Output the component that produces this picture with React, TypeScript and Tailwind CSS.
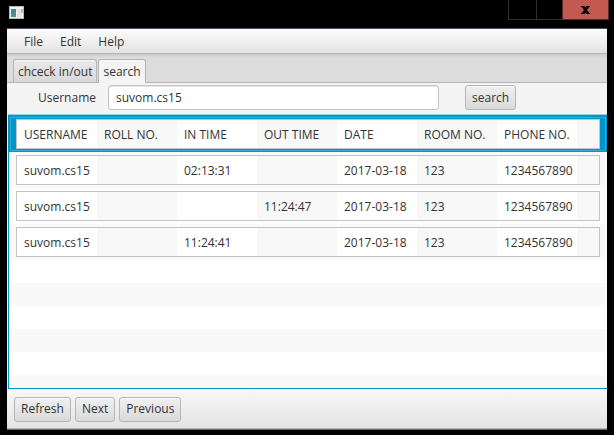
import React, { useState } from "react";

const columns = ["USERNAME", "ROLL NO.", "IN TIME", "OUT TIME", "DATE", "ROOM NO.", "PHONE NO."];

const records = [
  ["suvom.cs15", "", "02:13:31", "", "2017-03-18", "123", "1234567890"],
  ["suvom.cs15", "", "", "11:24:47", "2017-03-18", "123", "1234567890"],
  ["suvom.cs15", "", "11:24:41", "", "2017-03-18", "123", "1234567890"],
];

const cell =
  "flex w-20 items-center border-y border-[#c3c3c3] bg-white pt-0.5 pl-[7px] text-left font-normal first:w-[81px] first:border-l even:bg-[#f8f8f8] last:flex-1 last:border-r";

function PushButton({ children }: { children: React.ReactNode }) {
  return (
    <button
      type="button"
      className="flex h-[25px] items-center rounded-[3px] border border-[#b5b5b5] bg-linear-to-b from-[#f0f0f0] to-[#dadada] px-[6px] shadow-[inset_0_1px_0_#fafafa]"
    >
      {children}
    </button>
  );
}

function TitleBar() {
  return (
    <header className="flex h-7 items-start justify-between pr-[5px] pl-[9px]">
      <svg className="mt-[6px]" width="15" height="13" viewBox="0 0 15 13" aria-hidden="true">
        <defs>
          <linearGradient id="pane" x1="0" y1="0" x2="0" y2="1">
            <stop offset="0" stopColor="#4a80a0" />
            <stop offset="1" stopColor="#43a070" />
          </linearGradient>
        </defs>
        <rect width="15" height="13" fill="#b8b8b8" />
        <rect x="1" y="1" width="13" height="11" fill="#f0f0f0" />
        <rect x="2" y="3" width="5" height="8" fill="url(#pane)" />
        <rect x="8" y="3" width="4" height="8" fill="#e2e2e2" />
        <rect x="12" y="3" width="2" height="4" fill="#9dbdd0" />
      </svg>
      <div className="flex h-5">
        <button type="button" aria-label="Minimize" className="w-7 border-b border-l border-[#303030]" />
        <button type="button" aria-label="Maximize" className="w-[26px] border-b border-l border-[#303030]" />
        <button
          type="button"
          aria-label="Close"
          className="flex w-[47px] items-center justify-center border-r border-b border-l border-[#5a2a27] bg-[#c4594f]"
        >
          <svg width="9" height="8" viewBox="0 0 9 8" aria-hidden="true">
            <path d="M0 0h3.500l1 1.600L5.500 0H9v1h-.8L6 4l2.200 3H9v1H5.500l-1-1.600L3.500 8H0V7h.8L3 4 .8 1H0z" fill="#000" />
          </svg>
        </button>
      </div>
    </header>
  );
}

export default function App() {
  const [username, setUsername] = useState("suvom.cs15");

  return (
    <div className="flex min-h-screen flex-col bg-black pb-[5px] font-['Open_Sans','Noto_Sans',sans-serif] text-[12px] leading-4 text-[#333]">
      <TitleBar />
      <main className="mx-[7px] flex flex-1 flex-col border-t border-b border-t-[#465067] border-b-[#66717a] bg-[#f4f4f4]">
        <nav className="flex h-[25px] items-center gap-[17px] border-b border-[#b5b5b5] bg-linear-to-b from-[#fdfdfd] to-[#e3e3e3] pt-0.5 pl-[17px]">
          <button type="button">File</button>
          <button type="button">Edit</button>
          <button type="button">Help</button>
        </nav>

        <div
          role="tablist"
          className="flex h-[29px] items-end gap-px border-b border-[#b5b5b5] bg-[#dcdcdc] pl-[6px] shadow-[inset_0_3px_3px_-2px_#c4c4c4]"
        >
          <button
            role="tab"
            type="button"
            aria-selected="false"
            className="h-[23px] rounded-t-[3px] border border-b-0 border-[#b5b5b5] bg-linear-to-b from-[#eaeaea] to-[#d8d8d8] px-1 pt-0.5 shadow-[inset_0_1px_0_#f6f6f6]"
          >
            chceck in/out
          </button>
          <button
            role="tab"
            type="button"
            aria-selected="true"
            className="-mb-px h-6 rounded-t-[3px] border border-b-0 border-[#b5b5b5] bg-[#f4f4f4] px-1"
          >
            search
          </button>
        </div>

        <form className="flex h-[31px] items-start pt-0.5 pl-[31px]" onSubmit={(e) => e.preventDefault()}>
          <label htmlFor="username" className="w-[70px] leading-[25px]">
            Username
          </label>
          <input
            id="username"
            value={username}
            onChange={(e) => setUsername(e.target.value)}
            className="mr-[26px] h-[25px] w-[331px] rounded-[3px] border border-[#c3c3c3] bg-white px-[7px] shadow-[inset_0_1px_1px_#e6e6e6] outline-none"
          />
          <PushButton>search</PushButton>
        </form>

        <section className="flex flex-1 flex-col border-t border-l border-t-[#8fd3ea] border-l-[#e4f4fa]">
          <div className="flex-1 border border-r-0 border-[#0096c9] bg-[repeating-linear-gradient(to_bottom,#fff_0_23px,#f9f9f9_23px_46px)] bg-position-[0_144px]">
            <table className="block">
              <thead className="block">
                <tr className="flex h-9 bg-[#0096c9] px-[7px] py-[3px] shadow-[inset_0_0_0_1px_#0096c9,inset_0_0_0_2px_#32abd4]">
                  {columns.map((name) => (
                    <th key={name} scope="col" className={cell}>
                      {name}
                    </th>
                  ))}
                  <td className={cell} />
                </tr>
              </thead>
              <tbody className="block">
                {records.map((record, index) => (
                  <tr key={index} className="flex h-9 bg-white px-[7px] py-[3px] odd:bg-[#f9f9f9]">
                    {record.map((value, i) => (
                      <td key={i} className={cell}>
                        {value}
                      </td>
                    ))}
                    <td className={cell} />
                  </tr>
                ))}
              </tbody>
            </table>
          </div>
        </section>

        <footer className="flex h-10 items-center gap-1 border-b border-[#b5b5b5] bg-linear-to-b from-[#f8f8f8] to-[#e4e4e4] pt-px pl-[7px]">
          <PushButton>Refresh</PushButton>
          <PushButton>Next</PushButton>
          <PushButton>Previous</PushButton>
        </footer>
      </main>
    </div>
  );
}
